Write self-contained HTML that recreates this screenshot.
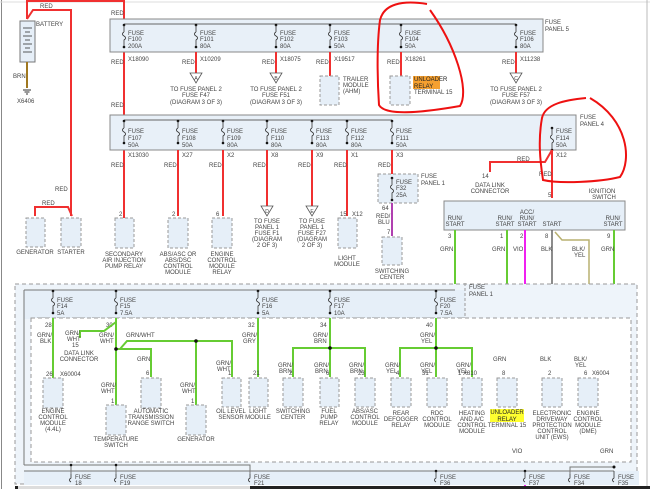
<!DOCTYPE html>
<html><head><meta charset="utf-8"><style>
html,body{margin:0;padding:0;background:#fff;}
svg{display:block;font-family:"Liberation Sans",sans-serif;}
text{font-size:6px;fill:#444;}
.m{text-anchor:middle;}
.box{fill:#e6eff8;stroke:#999;stroke-width:1;stroke-dasharray:3,2;}
.pan{fill:#e8f0f8;stroke:#888;stroke-width:1;}
.r{stroke:#f03030;stroke-width:2;fill:none;}
.g{stroke:#66cc33;stroke-width:2;fill:none;}
.k{stroke:#555;stroke-width:1;fill:none;}
</style></head><body>
<svg width="650" height="489" viewBox="0 0 650 489" xmlns="http://www.w3.org/2000/svg">
<defs>
<g id="fz"><circle cx="0" cy="0" r="1.3" fill="#111"/><path d="M0 0V7M0 7c-2 1-2 3 0 4M0 11c2 1 2 3 0 4V22" stroke="#333" stroke-width="0.8" fill="none"/><circle cx="0" cy="22" r="1.3" fill="#111"/></g>
<path id="tri" d="M-6 0H6L0 10Z" fill="#fff" stroke="#555" stroke-width="0.8"/>
</defs>
<rect x="0" y="0" width="650" height="489" fill="#fff"/>
<line x1="1.5" y1="0" x2="1.5" y2="489" stroke="#888"/>
<line x1="0" y1="2" x2="650" y2="2" stroke="#ddd"/>
<line x1="647" y1="0" x2="647" y2="489" stroke="#bbb"/>

<!-- battery -->
<path class="r" d="M27 0V19M27 1H124V218"/>
<path class="r" d="M27 19L33 10H71V216"/>
<path class="r" d="M35 216V207H68L72 216"/>
<rect x="20" y="21" width="15" height="41" fill="#e6eff8" stroke="#777"/>
<g stroke="#333" stroke-width="0.8"><line x1="23" y1="28" x2="32" y2="28"/><line x1="25" y1="32" x2="30" y2="32"/><line x1="23" y1="36" x2="32" y2="36"/><line x1="25" y1="40" x2="30" y2="40"/><line x1="23" y1="44" x2="32" y2="44"/><line x1="25" y1="48" x2="30" y2="48"/><line x1="23" y1="52" x2="32" y2="52"/></g>
<text x="36" y="26">BATTERY</text><text x="40" y="8">RED</text>
<line x1="27" y1="62" x2="27" y2="88" stroke="#a07820" stroke-width="2"/>
<text x="13" y="78">BRN</text>
<path d="M23 90H31M24.5 92H29.5M26 94H28" stroke="#333"/><text x="17" y="103">X6406</text>
<text x="55" y="191">RED</text><text x="42" y="205">RED</text>
<rect class="box" x="26" y="218" width="19" height="29"/><rect class="box" x="61" y="218" width="20" height="29"/>
<text class="m" x="35" y="254">GENERATOR</text><text class="m" x="71" y="254">STARTER</text>

<!-- fuse panel 5 -->
<rect class="pan" x="110" y="19" width="433" height="33"/>
<line x1="124" y1="24" x2="516" y2="24" stroke="#666"/>
<text x="545" y="24">FUSE</text><text x="545" y="31">PANEL 5</text>
<g>
<use href="#fz" x="124" y="25"/><use href="#fz" x="196" y="25"/><use href="#fz" x="276" y="25"/><use href="#fz" x="330" y="25"/><use href="#fz" x="401" y="25"/><use href="#fz" x="516" y="25"/>
</g>
<text x="128" y="35">FUSE</text><text x="128" y="41">F100</text><text x="128" y="48">200A</text>
<text x="200" y="35">FUSE</text><text x="200" y="41">F101</text><text x="200" y="48">80A</text>
<text x="280" y="35">FUSE</text><text x="280" y="41">F102</text><text x="280" y="48">80A</text>
<text x="334" y="35">FUSE</text><text x="334" y="41">F103</text><text x="334" y="48">50A</text>
<text x="405" y="35">FUSE</text><text x="405" y="41">F104</text><text x="405" y="48">50A</text>
<text x="520" y="35">FUSE</text><text x="520" y="41">F106</text><text x="520" y="48">80A</text>
<text x="111" y="15">RED</text><text x="111" y="64">RED</text>
<text x="128" y="61">X18090</text><text x="200" y="61">X10209</text><text x="280" y="61">X18075</text><text x="334" y="61">X19517</text><text x="405" y="61">X18261</text><text x="520" y="61">X11238</text>
<path class="r" d="M196 52V73M276 52V73M330 52V76M401 52V76M516 52V73"/>
<text x="182" y="64">RED</text><text x="262" y="64">RED</text><text x="316" y="64">RED</text><text x="387" y="64">RED</text><text x="502" y="64">RED</text>
<use href="#tri" x="196" y="73"/><use href="#tri" x="276" y="73"/><use href="#tri" x="516" y="73"/>
<text class="m" x="196" y="80" style="font-size:5px">A</text><text class="m" x="276" y="80" style="font-size:5px">B</text><text class="m" x="516" y="80" style="font-size:5px">C</text>
<text class="m" x="196" y="91">TO FUSE PANEL 2</text><text class="m" x="196" y="97">FUSE F47</text><text class="m" x="196" y="104">(DIAGRAM 3 OF 3)</text>
<text class="m" x="276" y="91">TO FUSE PANEL 2</text><text class="m" x="276" y="97">FUSE F51</text><text class="m" x="276" y="104">(DIAGRAM 3 OF 3)</text>
<text class="m" x="516" y="91">TO FUSE PANEL 2</text><text class="m" x="516" y="97">FUSE F57</text><text class="m" x="516" y="104">(DIAGRAM 3 OF 3)</text>
<rect class="box" x="320" y="76" width="19" height="29"/>
<text x="343" y="81">TRAILER</text><text x="343" y="87">MODULE</text><text x="343" y="93">(AHM)</text>
<rect class="box" x="390" y="76" width="20" height="29"/>
<rect x="413" y="76" width="27" height="13" fill="#f5a030"/>
<text x="414" y="81" style="fill:#222">UNLOADER</text><text x="414" y="88" style="fill:#222">RELAY</text><text x="414" y="94">TERMINAL 15</text>

<!-- fuse panel 4 -->
<rect class="pan" x="110" y="115" width="466" height="35"/>
<line x1="124" y1="120" x2="392" y2="120" stroke="#666"/>
<text x="580" y="119">FUSE</text><text x="580" y="126">PANEL 4</text>
<use href="#fz" x="124" y="121"/><use href="#fz" x="178" y="121"/><use href="#fz" x="223" y="121"/><use href="#fz" x="267" y="121"/><use href="#fz" x="312" y="121"/><use href="#fz" x="347" y="121"/><use href="#fz" x="392" y="121"/><use href="#fz" x="552" y="128"/>
<text x="128" y="133">FUSE</text><text x="128" y="140">F107</text><text x="128" y="147">50A</text>
<text x="182" y="133">FUSE</text><text x="182" y="140">F108</text><text x="182" y="147">50A</text>
<text x="227" y="133">FUSE</text><text x="227" y="140">F109</text><text x="227" y="147">80A</text>
<text x="271" y="133">FUSE</text><text x="271" y="140">F110</text><text x="271" y="147">80A</text>
<text x="316" y="133">FUSE</text><text x="316" y="140">F113</text><text x="316" y="147">80A</text>
<text x="351" y="133">FUSE</text><text x="351" y="140">F112</text><text x="351" y="147">80A</text>
<text x="396" y="133">FUSE</text><text x="396" y="140">F111</text><text x="396" y="147">50A</text>
<text x="556" y="133">FUSE</text><text x="556" y="140">F114</text><text x="556" y="147">50A</text>
<text x="111" y="107">RED</text>
<text x="128" y="157">X13030</text><text x="182" y="157">X27</text><text x="227" y="157">X2</text><text x="271" y="157">X8</text><text x="316" y="157">X9</text><text x="351" y="157">X1</text><text x="396" y="157">X3</text><text x="556" y="157">X12</text>
<path class="r" d="M178 150V216M223 150V216M267 150V206M312 150V206M347 150V216M392 150V174"/>
<text x="111" y="167">RED</text><text x="164" y="167">RED</text><text x="209" y="167">RED</text><text x="253" y="167">RED</text><text x="298" y="167">RED</text><text x="334" y="167">RED</text><text x="378" y="167">RED</text>
<use href="#tri" x="267" y="206"/><use href="#tri" x="312" y="206"/>
<text class="m" x="267" y="213" style="font-size:5px">D</text><text class="m" x="312" y="213" style="font-size:5px">E</text>
<rect class="box" x="115" y="218" width="19" height="30"/><rect class="box" x="168" y="218" width="20" height="30"/><rect class="box" x="212" y="218" width="20" height="30"/><rect class="box" x="338" y="218" width="19" height="30"/>
<text x="119" y="216">2</text><text x="172" y="216">2</text><text x="216" y="216">6</text><text x="340" y="216">15</text><text x="352" y="216">X12</text>
<text class="m" x="124" y="256">SECONDARY</text><text class="m" x="124" y="262">AIR INJECTION</text><text class="m" x="124" y="268">PUMP RELAY</text>
<text class="m" x="178" y="256">ABS/ASC OR</text><text class="m" x="178" y="262">ABS/DSC</text><text class="m" x="178" y="268">CONTROL</text><text class="m" x="178" y="274">MODULE</text>
<text class="m" x="222" y="256">ENGINE</text><text class="m" x="222" y="262">CONTROL</text><text class="m" x="222" y="268">MODULE</text><text class="m" x="222" y="274">RELAY</text>
<text class="m" x="267" y="223">TO FUSE</text><text class="m" x="267" y="229">PANEL 1</text><text class="m" x="267" y="235">FUSE F1</text><text class="m" x="267" y="241">(DIAGRAM</text><text class="m" x="267" y="247">2 OF 3)</text>
<text class="m" x="312" y="223">TO FUSE</text><text class="m" x="312" y="229">PANEL 1</text><text class="m" x="312" y="235">FUSE F27</text><text class="m" x="312" y="241">(DIAGRAM</text><text class="m" x="312" y="247">2 OF 3)</text>
<text class="m" x="347" y="260">LIGHT</text><text class="m" x="347" y="266">MODULE</text>
<rect class="box" x="378" y="174" width="40" height="29"/>
<use href="#fz" x="392" y="178"/>
<text x="396" y="184">FUSE</text><text x="396" y="190">F32</text><text x="396" y="197">25A</text>
<text x="421" y="178">FUSE</text><text x="421" y="185">PANEL 1</text>
<line x1="392" y1="203" x2="392" y2="236" stroke="#b040b0" stroke-width="2"/>
<text x="382" y="210">64</text><text x="376" y="218">RED/</text><text x="378" y="224">BLU</text><text x="387" y="234">7</text>
<rect class="box" x="382" y="237" width="20" height="28"/>
<text class="m" x="392" y="273">SWITCHING</text><text class="m" x="392" y="279">CENTER</text>

<!-- data link / ignition -->
<path class="r" d="M552 150L545 162H490V172M552 150V198"/>
<text x="517" y="161">RED</text><text x="539" y="176">RED</text>
<text x="482" y="178">14</text><text class="m" x="490" y="187">DATA LINK</text><text class="m" x="490" y="193">CONNECTOR</text>
<text x="548" y="197">5</text>
<text class="m" x="602" y="193">IGNITION</text><text class="m" x="604" y="199">SWITCH</text>
<rect x="444" y="201" width="181" height="29" fill="#e6eff8" stroke="#888"/>
<text class="m" x="455" y="220">RUN/</text><text class="m" x="455" y="226">START</text>
<text class="m" x="505" y="220">RUN/</text><text class="m" x="505" y="226">START</text>
<text class="m" x="527" y="214">ACC/</text><text class="m" x="527" y="220">RUN/</text><text class="m" x="527" y="226">START</text>
<text class="m" x="552" y="226">START</text>
<text class="m" x="613" y="220">RUN/</text><text class="m" x="613" y="226">START</text>
<text x="448" y="238">3</text><text x="500" y="238">1</text><text x="520" y="238">2</text><text x="545" y="238">8</text><text x="607" y="238">9</text>
<path class="g" d="M455 230V288M507 230V378M614 230V472"/>
<line x1="525" y1="230" x2="525" y2="489" stroke="#f020f0" stroke-width="2"/>
<line x1="552" y1="230" x2="552" y2="378" stroke="#666" stroke-width="1.5"/>
<path d="M555 232L562 240H589V378" stroke="#b8b070" stroke-width="1.5" fill="none"/>
<text x="440" y="251">GRN</text><text x="492" y="251">GRN</text><text x="513" y="251">VIO</text><text x="541" y="251">BLK</text><text x="572" y="251">BLK/</text><text x="574" y="257">YEL</text><text x="601" y="251">GRN</text>

<!-- red circles -->
<path d="M427 4C402 0 384 4 380 20C376 50 378 90 379 105C385 116 420 113 460 106C470 90 455 45 430 10" stroke="#ee1111" stroke-width="2" fill="none"/>
<path d="M586 98C565 100 545 104 542 118C538 140 540 160 543 180C560 184 600 182 620 177C632 160 628 120 590 98" stroke="#ee1111" stroke-width="2" fill="none"/>

<!-- lower section -->
<rect x="15" y="284" width="622" height="200" fill="#eef4fa" stroke="#999" stroke-dasharray="4,3"/>
<rect x="24" y="290" width="441" height="29" fill="#e6eff8"/>
<path d="M24 290H455M24 290V465" stroke="#777" fill="none"/>
<path d="M465 283V318H31" stroke="#999" stroke-dasharray="3,2" fill="none"/>
<rect x="31" y="318" width="600" height="144" fill="#fff" stroke="#999" stroke-dasharray="4,3"/>
<text x="469" y="289">FUSE</text><text x="469" y="296">PANEL 1</text>
<use href="#fz" x="53" y="291"/><use href="#fz" x="116" y="291"/><use href="#fz" x="258" y="291"/><use href="#fz" x="330" y="291"/><use href="#fz" x="436" y="291"/>
<text x="57" y="302">FUSE</text><text x="57" y="308">F14</text><text x="57" y="315">5A</text>
<text x="120" y="302">FUSE</text><text x="120" y="308">F15</text><text x="120" y="315">7.5A</text>
<text x="262" y="302">FUSE</text><text x="262" y="308">F16</text><text x="262" y="315">5A</text>
<text x="334" y="302">FUSE</text><text x="334" y="308">F17</text><text x="334" y="315">10A</text>
<text x="440" y="302">FUSE</text><text x="440" y="308">F20</text><text x="440" y="315">7.5A</text>
<text x="45" y="327">28</text><text x="106" y="327">30</text><text x="248" y="327">32</text><text x="320" y="327">34</text><text x="426" y="327">40</text>
<path class="g" d="M53 318V378M116 318V405M116 322L104 331H80V338M116 349H151V377M120 349L127 341H232V377M196 341V405M258 318V377M330 318V377M293 377V348H365V377M436 318V377M400 377V348H472V377"/>
<g fill="#111"><circle cx="116" cy="349" r="1.8"/><circle cx="196" cy="341" r="1.8"/><circle cx="330" cy="348" r="1.8"/><circle cx="436" cy="348" r="1.8"/></g>
<text x="37" y="337">GRN/</text><text x="40" y="343">BLK</text>
<text x="65" y="335">GRN/</text><text x="67" y="341">WHT</text><text x="72" y="347">15</text>
<text class="m" x="79" y="355">DATA LINK</text><text class="m" x="79" y="361">CONNECTOR</text>
<text x="99" y="337">GRN/</text><text x="100" y="343">WHT</text><text x="126" y="337">GRN/WHT</text>
<text x="137" y="361">GRN</text><text x="101" y="387">GRN/</text><text x="101" y="393">WHT</text>
<text x="180" y="387">GRN/</text><text x="182" y="393">WHT</text>
<text x="216" y="365">GRN/</text><text x="217" y="371">WHT</text>
<text x="242" y="337">GRN/</text><text x="243" y="343">GRY</text>
<text x="278" y="367">GRN/</text><text x="279" y="373">BRN</text>
<text x="313" y="337">GRN/</text><text x="314" y="343">BRN</text><text x="314" y="367">GRN/</text><text x="315" y="373">BRN</text>
<text x="349" y="367">GRN/</text><text x="350" y="373">BRN</text>
<text x="420" y="337">GRN/</text><text x="421" y="343">YEL</text>
<text x="385" y="367">GRN/</text><text x="386" y="373">YEL</text><text x="420" y="367">GRN/</text><text x="421" y="373">YEL</text><text x="456" y="367">GRN/</text><text x="457" y="373">YEL</text>
<text x="493" y="361">GRN</text><text x="540" y="361">BLK</text><text x="574" y="361">BLK/</text><text x="575" y="367">YEL</text>
<text x="46" y="376">26</text><text x="60" y="376">X60004</text>
<text x="146" y="375">6</text><text x="228" y="375">1</text><text x="253" y="375">21</text><text x="289" y="375">2</text><text x="326" y="375">6</text><text x="358" y="375">23</text><text x="396" y="375">4</text><text x="422" y="375">31</text><text x="458" y="375">1</text><text x="463" y="375">X810</text><text x="502" y="375">8</text><text x="548" y="375">2</text><text x="584" y="375">6</text><text x="592" y="375">X6004</text>
<text x="111" y="403">1</text><text x="191" y="403">1</text>
<rect class="box" x="43" y="378" width="20" height="30"/>
<rect class="box" x="106" y="405" width="20" height="30"/>
<rect class="box" x="141" y="378" width="20" height="30"/>
<rect class="box" x="186" y="405" width="20" height="30"/>
<rect class="box" x="222" y="378" width="19" height="29"/>
<rect class="box" x="249" y="378" width="19" height="29"/>
<rect class="box" x="283" y="378" width="20" height="29"/>
<rect class="box" x="320" y="378" width="19" height="29"/>
<rect class="box" x="355" y="378" width="20" height="29"/>
<rect class="box" x="391" y="378" width="20" height="29"/>
<rect class="box" x="427" y="378" width="20" height="29"/>
<rect class="box" x="462" y="378" width="20" height="29"/>
<rect class="box" x="497" y="378" width="20" height="29"/>
<rect class="box" x="542" y="378" width="20" height="29"/>
<rect class="box" x="578" y="378" width="20" height="29"/>
<text class="m" x="53" y="413">ENGINE</text><text class="m" x="53" y="419">CONTROL</text><text class="m" x="53" y="425">MODULE</text><text class="m" x="53" y="431">(4.4L)</text>
<text class="m" x="116" y="441">TEMPERATURE</text><text class="m" x="116" y="447">SWITCH</text>
<text class="m" x="151" y="413">AUTOMATIC</text><text class="m" x="151" y="419">TRANSMISSION</text><text class="m" x="151" y="425">RANGE SWITCH</text>
<text class="m" x="196" y="441">GENERATOR</text>
<text class="m" x="231" y="413">OIL LEVEL</text><text class="m" x="231" y="419">SENSOR</text>
<text class="m" x="258" y="413">LIGHT</text><text class="m" x="258" y="419">MODULE</text>
<text class="m" x="293" y="413">SWITCHING</text><text class="m" x="293" y="419">CENTER</text>
<text class="m" x="329" y="413">FUEL</text><text class="m" x="329" y="419">PUMP</text><text class="m" x="329" y="425">RELAY</text>
<text class="m" x="365" y="413">ABS/ASC</text><text class="m" x="365" y="419">CONTROL</text><text class="m" x="365" y="425">MODULE</text>
<text class="m" x="401" y="415">REAR</text><text class="m" x="401" y="421">DEFOGGER</text><text class="m" x="401" y="427">RELAY</text>
<text class="m" x="437" y="415">RDC</text><text class="m" x="437" y="421">CONTROL</text><text class="m" x="437" y="427">MODULE</text>
<text class="m" x="472" y="415">HEATING</text><text class="m" x="472" y="421">AND A/C</text><text class="m" x="472" y="427">CONTROL</text><text class="m" x="472" y="433">MODULE</text>
<rect x="490" y="409" width="34" height="13" fill="#ffff30"/>
<text class="m" x="507" y="414" style="fill:#222">UNLOADER</text><text class="m" x="507" y="421" style="fill:#222">RELAY</text><text class="m" x="507" y="427">TERMINAL 15</text>
<text class="m" x="552" y="415">ELECTRONIC</text><text class="m" x="552" y="421">DRIVEWAY</text><text class="m" x="552" y="427">PROTECTION</text><text class="m" x="552" y="433">CONTROL</text><text class="m" x="552" y="439">UNIT (EWS)</text>
<text class="m" x="588" y="415">ENGINE</text><text class="m" x="588" y="421">CONTROL</text><text class="m" x="588" y="427">MODULE</text><text class="m" x="588" y="433">(DME)</text>
<text x="512" y="453">VIO</text><text x="600" y="453">GRN</text>

<!-- bottom panel -->
<rect x="24" y="471" width="615" height="14" fill="#e6eff8"/>
<path d="M24 465H250V474M71 465V474M116 465V474M24 471H614M570 474V467H614" stroke="#777" fill="none"/>
<g fill="#111"><circle cx="71" cy="465" r="1.3"/><circle cx="116" cy="465" r="1.3"/><circle cx="614" cy="467" r="1.5"/><circle cx="525" cy="471" r="1.3"/><circle cx="436" cy="471" r="1.3"/></g>
<g stroke="#333" stroke-width="0.8" fill="none"><path d="M71 474V478c-2 1-2 3 0 4M116 474V478c-2 1-2 3 0 4M250 474V478c-2 1-2 3 0 4M436 471V478c-2 1-2 3 0 4M525 471V478c-2 1-2 3 0 4M570 474V478c-2 1-2 3 0 4M614 471V478c-2 1-2 3 0 4"/></g>
<text x="75" y="479">FUSE</text><text x="75" y="485">18</text>
<text x="120" y="479">FUSE</text><text x="120" y="485">F19</text>
<text x="254" y="479">FUSE</text><text x="254" y="485">F21</text>
<text x="440" y="479">FUSE</text><text x="440" y="485">F36</text>
<text x="529" y="479">FUSE</text><text x="529" y="485">F37</text>
<text x="574" y="479">FUSE</text><text x="574" y="485">F34</text>
<text x="618" y="479">FUSE</text><text x="618" y="485">F35</text>
<rect x="15" y="486" width="635" height="3" fill="#222"/>
<rect x="18" y="486" width="232" height="3" fill="#ddd"/>
</svg>
</body></html>
